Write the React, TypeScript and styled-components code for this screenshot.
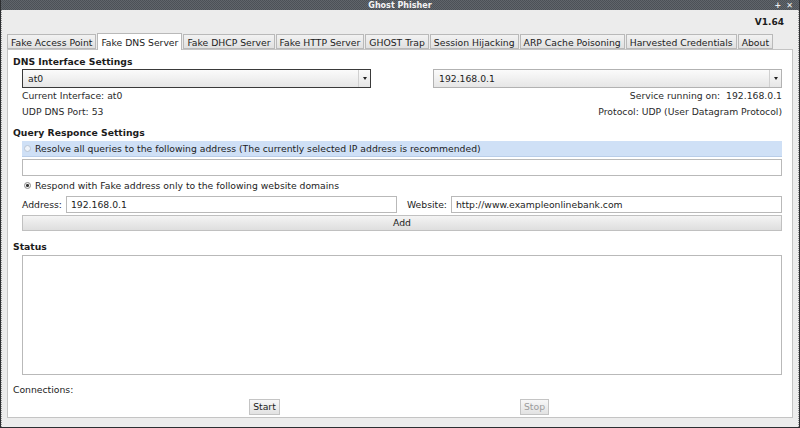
import styled, { createGlobalStyle } from 'styled-components';

const GlobalStyle = createGlobalStyle`
    html, body {
        margin: 0;
        padding: 0;
        background: #2f3236;
    }
    body {
        font-family: "DejaVu Sans", "Liberation Sans", sans-serif;
        font-size: 9.25px;
        color: #1c1c1c;
    }
`

//#region   Window frame
const Window = styled.div`
    width: 800px;
    height: 428px;
    box-sizing: border-box;
    display: flex;
    flex-direction: column;
    background: #ececec;
    border: 1px solid #2c2e31;
    border-top: none;
    overflow: hidden;
`

const TitleBar = styled.div`
    height: 10px;
    flex: none;
    position: relative;
    display: flex;
    align-items: center;
    justify-content: center;
    background-color: #575c62;
    background-image: repeating-conic-gradient(#4c5157 0 25%, #60656b 0 50%);
    background-size: 2px 2px;
    color: #f4f4f4;
    font-weight: bold;
    font-size: 8px;
`

const TitleButtons = styled.div`
    position: absolute;
    right: 6px;
    top: 0;
    height: 10px;
    display: flex;
    align-items: center;
    gap: 5px;
    font-size: 8px;
    color: #f0f0f0;
`

const Body = styled.div`
    flex: 1;
    display: flex;
    flex-direction: column;
    padding: 6px 5px 9px 5px;
    border-left: 1px dotted #9a9a9a;
    border-right: 1px dotted #9a9a9a;
`

const Version = styled.div`
    text-align: right;
    font-weight: bold;
    font-size: 9px;
    height: 12px;
    line-height: 12px;
    padding-right: 9px;
    margin-bottom: 4px;
`

const TabBar = styled.div`
    display: flex;
    align-items: flex-end;
    height: 17px;
`

const Tab = styled.div<{ $active?: boolean }>`
    height: ${p => (p.$active ? 17 : 15)}px;
    line-height: ${p => (p.$active ? 17 : 15)}px;
    padding: 0 3px;
    margin-right: 1px;
    box-sizing: border-box;
    border: 1px solid #b9b9b9;
    border-bottom: ${p => (p.$active ? 'none' : '1px solid #b9b9b9')};
    background: ${p => (p.$active ? '#ffffff' : 'linear-gradient(#f2f2f2, #e1e1e1)')};
    color: #1c1c1c;
    white-space: nowrap;
    position: relative;
    z-index: ${p => (p.$active ? 2 : 1)};
    margin-bottom: ${p => (p.$active ? '-1px' : '0')};
`

const Panel = styled.div`
    flex: 1;
    background: #ffffff;
    border: 1px solid #c4c4c4;
    display: flex;
    flex-direction: column;
    padding: 6px 10px 0 5px;
`
//#endregion

//#region   Form parts
const SectionTitle = styled.div<{ $plain?: boolean }>`
    font-weight: ${p => (p.$plain ? 'normal' : 'bold')};
    height: 12px;
    line-height: 12px;
`

const Indent = styled.div`
    padding-left: 9px;
    display: flex;
    flex-direction: column;
`

const TwoCols = styled.div`
    display: grid;
    grid-template-columns: 349px 1fr;
    column-gap: 62px;
`

const Column = styled.div<{ $right?: boolean }>`
    display: flex;
    flex-direction: column;
    align-items: ${p => (p.$right ? 'flex-end' : 'stretch')};
`

const Combo = styled.div<{ $focus?: boolean }>`
    height: 19px;
    box-sizing: border-box;
    display: flex;
    align-items: center;
    border: 1px solid ${p => (p.$focus ? '#3a3a3a' : '#b2b2b2')};
    background: linear-gradient(#fbfbfb, #e6e6e6);
    align-self: stretch;
    span {
        flex: 1;
        padding-left: 5px;
    }
`

const ComboArrow = styled.div`
    width: 11px;
    height: 100%;
    border-left: 1px solid #d0d0d0;
    display: flex;
    align-items: center;
    justify-content: center;
    &::after {
        content: '';
        border-left: 2.5px solid transparent;
        border-right: 2.5px solid transparent;
        border-top: 3px solid #222;
    }
`

const InfoLine = styled.div`
    height: 16px;
    line-height: 16px;
    color: #2a2a2a;
    white-space: pre;
`

const RadioRow = styled.div<{ $highlight?: boolean }>`
    height: 16px;
    display: flex;
    align-items: center;
    gap: 4px;
    padding-left: 2px;
    background: ${p => (p.$highlight ? '#cfe0f6' : 'transparent')};
    border-bottom: 1px solid ${p => (p.$highlight ? '#b9cde8' : 'transparent')};
    box-sizing: border-box;
    color: #1c1c1c;
`

const Radio = styled.span<{ $checked?: boolean }>`
    width: 5px;
    height: 5px;
    border-radius: 50%;
    border: 1px solid ${p => (p.$checked ? '#8a8a8a' : '#b8c4d4')};
    background: ${p => (p.$checked ? 'radial-gradient(circle, #333 0 1.3px, #f4f4f4 1.6px)' : '#eef3fa')};
`

const TextBox = styled.div<{ $h?: number }>`
    height: ${p => p.$h ?? 17}px;
    line-height: 15px;
    box-sizing: border-box;
    border: 1px solid #b9b9b9;
    background: #ffffff;
    padding-left: 4px;
    color: #1c1c1c;
    min-width: 0;
`

const FieldRow = styled.div`
    display: grid;
    grid-template-columns: auto 1fr auto 1fr;
    align-items: center;
    column-gap: 4px;
    label:nth-of-type(2) {
        margin-left: 6px;
    }
`

const WideButton = styled.div`
    height: 16px;
    line-height: 14px;
    box-sizing: border-box;
    border: 1px solid #c0c0c0;
    background: linear-gradient(#f4f4f4, #dedede);
    text-align: center;
    color: #1c1c1c;
`

const ButtonRow = styled.div`
    display: grid;
    grid-template-columns: 270px 270px;
    justify-content: center;
    justify-items: center;
    padding-left: 4px;
`

const SmallButton = styled.div<{ $disabled?: boolean }>`
    height: 16px;
    line-height: 14px;
    box-sizing: border-box;
    padding: 0 3px;
    border: 1px solid #c4c4c4;
    background: linear-gradient(#f7f7f7, #e2e2e2);
    color: ${p => (p.$disabled ? '#9c9c9c' : '#1c1c1c')};
`
//#endregion

const tabs = [
    'Fake Access Point',
    'Fake DNS Server',
    'Fake DHCP Server',
    'Fake HTTP Server',
    'GHOST Trap',
    'Session Hijacking',
    'ARP Cache Poisoning',
    'Harvested Credentials',
    'About',
];

export default function App() {
    return (
        <>
            <GlobalStyle />
            <Window>
                <TitleBar>
                    Ghost Phisher
                    <TitleButtons>
                        <span>+</span>
                        <span>✕</span>
                    </TitleButtons>
                </TitleBar>

                <Body>
                    <Version>V1.64</Version>

                    <TabBar>
                        {tabs.map(t => (
                            <Tab key={t} $active={t === 'Fake DNS Server'}>{t}</Tab>
                        ))}
                    </TabBar>

                    <Panel>
                        <SectionTitle>DNS Interface Settings</SectionTitle>
                        <Indent style={{ marginTop: 1 }}>
                            <TwoCols>
                                <Column>
                                    <Combo $focus><span>at0</span><ComboArrow /></Combo>
                                    <InfoLine>Current Interface: at0</InfoLine>
                                    <InfoLine>UDP DNS Port: 53</InfoLine>
                                </Column>
                                <Column $right>
                                    <Combo><span>192.168.0.1</span><ComboArrow /></Combo>
                                    <InfoLine>Service running on:  192.168.0.1</InfoLine>
                                    <InfoLine>Protocol: UDP (User Datagram Protocol)</InfoLine>
                                </Column>
                            </TwoCols>
                        </Indent>

                        <SectionTitle style={{ marginTop: 7 }}>Query Responce Settings</SectionTitle>
                        <Indent style={{ gap: 2, marginTop: 2 }}>
                            <RadioRow $highlight>
                                <Radio />
                                Resolve all queries to the following address (The currently selected IP address is recommended)
                            </RadioRow>
                            <TextBox />
                            <RadioRow>
                                <Radio $checked />
                                Respond with Fake address only to the following website domains
                            </RadioRow>
                            <FieldRow>
                                <label>Address:</label>
                                <TextBox>192.168.0.1</TextBox>
                                <label>Website:</label>
                                <TextBox>http://www.exampleonlinebank.com</TextBox>
                            </FieldRow>
                            <WideButton>Add</WideButton>
                        </Indent>

                        <SectionTitle style={{ marginTop: 10 }}>Status</SectionTitle>
                        <Indent style={{ marginTop: 2 }}>
                            <TextBox $h={120} />
                        </Indent>

                        <SectionTitle $plain style={{ marginTop: 9 }}>Connections:</SectionTitle>
                        <ButtonRow style={{ marginTop: 3 }}>
                            <SmallButton>Start</SmallButton>
                            <SmallButton $disabled>Stop</SmallButton>
                        </ButtonRow>
                    </Panel>
                </Body>
            </Window>
        </>
    );
}
